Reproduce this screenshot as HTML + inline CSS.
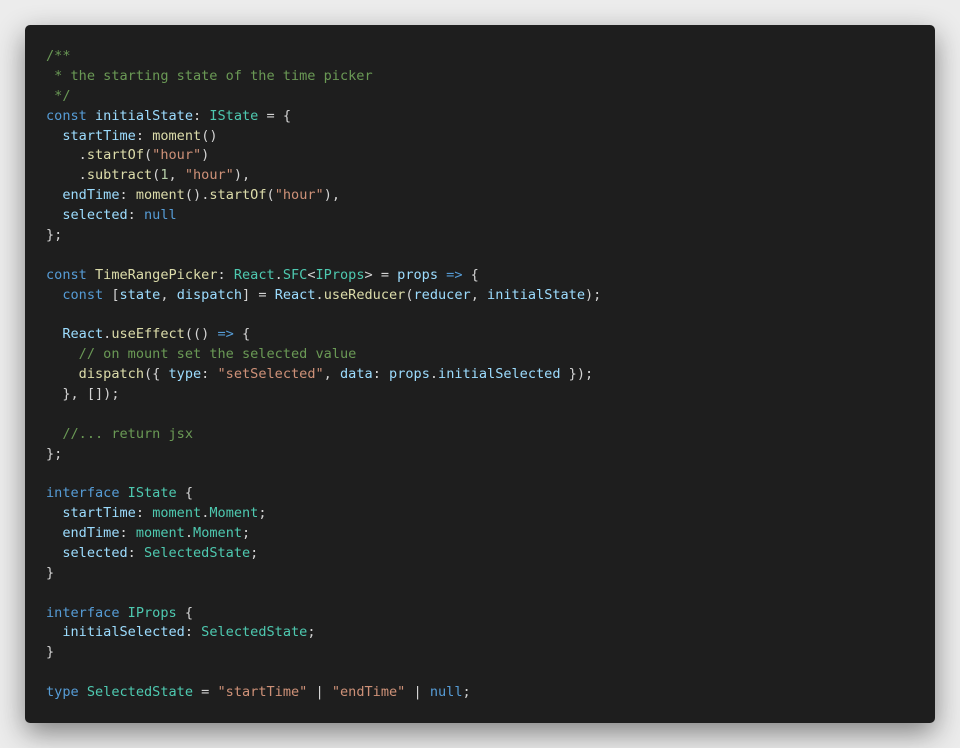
<!DOCTYPE html>
<html><head><meta charset="utf-8"><style>
html,body{margin:0;padding:0;width:960px;height:748px;overflow:hidden;background:#ececec;}
.win{position:absolute;left:25px;top:25px;width:910px;height:698px;background:#1e1e1e;border-radius:5px;box-shadow:0 10px 28px rgba(0,0,0,0.45);}
pre{margin:0;position:absolute;left:21px;top:22px;font-family:"DejaVu Sans Mono","Liberation Mono",monospace;font-size:13.57px;line-height:19.875px;color:#d4d4d4;}
.c{color:#6a9955}.k{color:#569cd6}.v{color:#9cdcfe}.t{color:#4ec9b0}.f{color:#dcdcaa}.s{color:#ce9178}.n{color:#b5cea8}
</style></head><body><div class="win"><pre><span class="c">/**
 * the starting state of the time picker
 */</span>
<span class="k">const</span> <span class="v">initialState</span>: <span class="t">IState</span> = {
  <span class="v">startTime</span>: <span class="f">moment</span>()
    .<span class="f">startOf</span>(<span class="s">"hour"</span>)
    .<span class="f">subtract</span>(<span class="n">1</span>, <span class="s">"hour"</span>),
  <span class="v">endTime</span>: <span class="f">moment</span>().<span class="f">startOf</span>(<span class="s">"hour"</span>),
  <span class="v">selected</span>: <span class="k">null</span>
};

<span class="k">const</span> <span class="f">TimeRangePicker</span>: <span class="t">React</span>.<span class="t">SFC</span>&lt;<span class="t">IProps</span>&gt; = <span class="v">props</span> <span class="k">=&gt;</span> {
  <span class="k">const</span> [<span class="v">state</span>, <span class="v">dispatch</span>] = <span class="v">React</span>.<span class="f">useReducer</span>(<span class="v">reducer</span>, <span class="v">initialState</span>);

  <span class="v">React</span>.<span class="f">useEffect</span>(() <span class="k">=&gt;</span> {
    <span class="c">// on mount set the selected value</span>
    <span class="f">dispatch</span>({ <span class="v">type</span>: <span class="s">"setSelected"</span>, <span class="v">data</span>: <span class="v">props</span>.<span class="v">initialSelected</span> });
  }, []);

  <span class="c">//... return jsx</span>
};

<span class="k">interface</span> <span class="t">IState</span> {
  <span class="v">startTime</span>: <span class="t">moment</span>.<span class="t">Moment</span>;
  <span class="v">endTime</span>: <span class="t">moment</span>.<span class="t">Moment</span>;
  <span class="v">selected</span>: <span class="t">SelectedState</span>;
}

<span class="k">interface</span> <span class="t">IProps</span> {
  <span class="v">initialSelected</span>: <span class="t">SelectedState</span>;
}

<span class="k">type</span> <span class="t">SelectedState</span> = <span class="s">"startTime"</span> | <span class="s">"endTime"</span> | <span class="k">null</span>;</pre></div></body></html>
